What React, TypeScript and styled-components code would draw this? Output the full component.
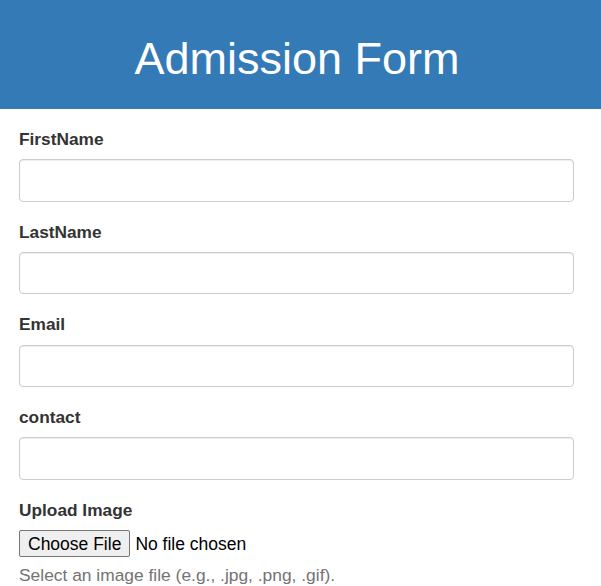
import React from "react";
import styled, { createGlobalStyle } from "styled-components";

const Global = createGlobalStyle`
  html, body { margin: 0; padding: 0; background: #fff; }
  body { font-family: "Liberation Sans", Arial, sans-serif; color: #333; }
  * { box-sizing: border-box; }
`;

const Header = styled.header`
  background: #337ab7;
  height: 109px;
  padding: 7px 7px 0 0;
  display: flex;
  align-items: center;
  justify-content: center;
`;

const Title = styled.h1`
  margin: 0;
  color: #fff;
  font-weight: 400;
  font-size: 45px;
  line-height: 1;
`;

const Form = styled.form`
  padding: 18px 27.5px 0 19px;
`;

const Group = styled.div`
  margin-bottom: 18px;
`;

const Label = styled.label`
  display: block;
  font-weight: 700;
  font-size: 17.3px;
  line-height: 24px;
  margin-bottom: 8.3px;
  color: #333;
`;

const Input = styled.input`
  display: block;
  width: 100%;
  height: 42.4px;
  border: 1px solid #ccc;
  border-radius: 4px;
  padding: 6px 12px;
  font: inherit;
  box-shadow: inset 0 1px 1px rgba(0, 0, 0, 0.075);
`;

const FileInput = styled.input`
  display: block;
  font-family: "Liberation Sans", Arial, sans-serif;
  font-size: 17.5px;
  color: #000;
  line-height: 20px;

  &::file-selector-button {
    font: inherit;
    color: #000;
    padding: 2.7px 8px;
    margin-right: 5px;
    border: 1px solid #767676;
    border-radius: 2px;
    background: #efefef;
  }
`;

const Help = styled.p`
  margin: 6px 0 0;
  color: #737373;
  font-size: 17.4px;
  line-height: 24px;
`;

const fields = ["FirstName", "LastName", "Email", "contact"];

export default function App() {
  return (
    <>
      <Global />
      <Header>
        <Title>Admission Form</Title>
      </Header>
      <Form>
        {fields.map((f) => (
          <Group key={f}>
            <Label htmlFor={f}>{f}</Label>
            <Input id={f} type="text" />
          </Group>
        ))}
        <div>
          <Label htmlFor="img">Upload Image</Label>
          <FileInput id="img" type="file" />
          <Help>Select an image file (e.g., .jpg, .png, .gif).</Help>
        </div>
      </Form>
    </>
  );
}
